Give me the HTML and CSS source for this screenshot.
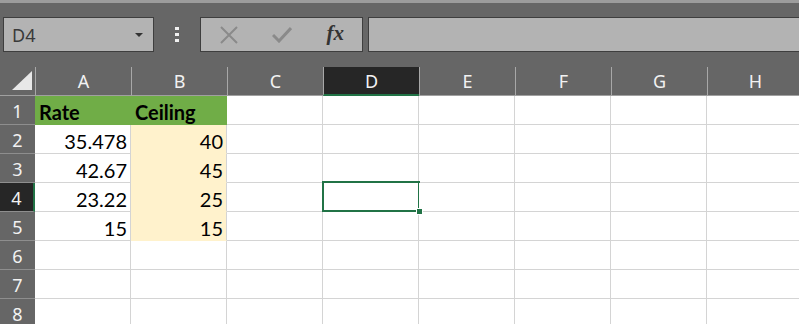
FILE: index.html
```html
<!DOCTYPE html>
<html lang="en">
<head>
    <meta charset="UTF-8">
    <title>Sheet</title>
    <link rel="stylesheet" href="styles.css">
</head>
<body>

<div class="topline"></div>
<div class="toolbar">
    <div class="namebox">
        <span>D4</span>
        <svg class="arrow" width="8" height="4" viewBox="0 0 8 4"><polygon points="0,0 8,0 4,4" fill="#333"/></svg>
    </div>
    <div class="grip"><i></i><i></i><i></i></div>
    <div class="fxbox">
        <div class="slot">
            <svg width="18" height="18" viewBox="0 0 18 18"><path d="M1 1 L17 17 M17 1 L1 17" stroke="#8a8a8a" stroke-width="2" fill="none"/></svg>
        </div>
        <div class="slot">
            <svg width="20" height="17" viewBox="0 0 20 17"><path d="M1 9 L7 15 L19 2" stroke="#8a8a8a" stroke-width="3" fill="none"/></svg>
        </div>
        <div class="slot"><span class="fx">fx</span></div>
    </div>
    <div class="formula"></div>
</div>

<div class="sheet">
    <!-- шапка колонок -->
    <div class="corner">
        <svg width="20" height="19" viewBox="0 0 20 19"><polygon points="20,0 20,19 0,19" fill="#e8e8e8"/></svg>
    </div>
    <div class="colhead">A</div>
    <div class="colhead">B</div>
    <div class="colhead">C</div>
    <div class="colhead active">D</div>
    <div class="colhead">E</div>
    <div class="colhead">F</div>
    <div class="colhead">G</div>
    <div class="colhead">H</div>

    <div class="rowhead">1</div>
    <div class="cell head">Rate</div>
    <div class="cell head">Ceiling</div>
    <div class="cell"></div><div class="cell"></div><div class="cell"></div><div class="cell"></div><div class="cell"></div><div class="cell"></div>

    <div class="rowhead">2</div>
    <div class="cell num">35.478</div>
    <div class="cell num ceil">40</div>
    <div class="cell"></div><div class="cell"></div><div class="cell"></div><div class="cell"></div><div class="cell"></div><div class="cell"></div>

    <div class="rowhead">3</div>
    <div class="cell num">42.67</div>
    <div class="cell num ceil">45</div>
    <div class="cell"></div><div class="cell"></div><div class="cell"></div><div class="cell"></div><div class="cell"></div><div class="cell"></div>

    <div class="rowhead active">4</div>
    <div class="cell num">23.22</div>
    <div class="cell num ceil">25</div>
    <div class="cell"></div>
    <div class="cell selected"><span class="handle"></span></div>
    <div class="cell"></div><div class="cell"></div><div class="cell"></div><div class="cell"></div>

    <div class="rowhead">5</div>
    <div class="cell num">15</div>
    <div class="cell num ceil">15</div>
    <div class="cell"></div><div class="cell"></div><div class="cell"></div><div class="cell"></div><div class="cell"></div><div class="cell"></div>

    <div class="rowhead">6</div>
    <div class="cell"></div><div class="cell"></div><div class="cell"></div><div class="cell"></div><div class="cell"></div><div class="cell"></div><div class="cell"></div><div class="cell"></div>

    <div class="rowhead">7</div>
    <div class="cell"></div><div class="cell"></div><div class="cell"></div><div class="cell"></div><div class="cell"></div><div class="cell"></div><div class="cell"></div><div class="cell"></div>

    <div class="rowhead">8</div>
    <div class="cell"></div><div class="cell"></div><div class="cell"></div><div class="cell"></div><div class="cell"></div><div class="cell"></div><div class="cell"></div><div class="cell"></div>
</div>

</body>
</html>
```

FILE: styles.css
```css
* {
    box-sizing: border-box;
}
html, body {
    margin: 0;
    padding: 0;
    width: 799px;
    height: 324px;
    overflow: hidden;
    background: #666;
    font-family: "Noto Sans", Arial, sans-serif;
}
.topline {
    height: 3px;
    background: #9c9c9c;
}
.toolbar {
    display: flex;
    height: 64px;
    padding-top: 14px;
    align-items: flex-start;
}
.namebox, .fxbox, .formula {
    height: 35px;
    background: #b3b3b3;
    border: 1px solid #3e3e3e;
}
.namebox {
    width: 151px;
    margin-left: 3px;
    display: flex;
    align-items: center;
    justify-content: space-between;
    padding: 0 10px 0 8px;
    color: #3a3a3a;
    font-size: 18px;
}
.arrow {
    margin-top: 1px;
}
.grip {
    width: 46px;
    height: 35px;
    display: flex;
    flex-direction: column;
    align-items: center;
    justify-content: center;
    gap: 3px;
}
.grip i {
    display: block;
    width: 4px;
    height: 3px;
    background: #f0f0f0;
}
.fxbox {
    width: 163px;
    display: flex;
    padding-left: 1px;
}
.slot {
    width: 54px;
    display: flex;
    align-items: center;
    justify-content: center;
}
.fx {
    font-family: "Liberation Serif", serif;
    font-style: italic;
    font-weight: bold;
    font-size: 21px;
    color: #333;
    margin-top: -3px;
}
.formula {
    flex: 1;
    margin-left: 5px;
    border-right: none;
}

.sheet {
    display: grid;
    grid-template-columns: 35px repeat(8, 96px);
    grid-template-rows: 29px repeat(8, 29px);
}
.corner {
    display: flex;
    justify-content: flex-end;
    align-items: flex-end;
    padding: 0 3px 5px 0;
    border-bottom: 1px solid #a0a0a0;
}
.colhead {
    display: flex;
    justify-content: center;
    align-items: flex-end;
    padding-bottom: 2px;
    color: #f2f2f2;
    font-size: 18px;
    border-left: 1px solid #a8a8a8;
    border-bottom: 1px solid #a0a0a0;
}
.colhead.active {
    background: #262626;
    border-bottom: 2px solid #217346;
    padding-bottom: 1px;
}
.rowhead {
    display: flex;
    justify-content: center;
    align-items: center;
    padding-top: 2px;
    color: #f2f2f2;
    font-size: 18px;
    border-bottom: 1px solid #8e8e8e;
}
.rowhead.active {
    background: #262626;
    border-right: 2px solid #217346;
}
.cell {
    position: relative;
    background: #fff;
    border-right: 1px solid #d4d4d4;
    border-bottom: 1px solid #d4d4d4;
    display: flex;
    align-items: flex-end;
    padding: 0 4px 0 4px;
    font-family: Lato, "Liberation Sans", sans-serif;
    font-size: 20px;
    line-height: 24px;
    color: #000;
}
.cell.head {
    background: #70ad47;
    border-color: #70ad47;
    font-weight: bold;
}
.cell.num {
    justify-content: flex-end;
    padding-right: 3px;
}
.cell.ceil {
    background: #fff2cc;
    border-bottom-color: #fff2cc;
}
.selected::after {
    content: "";
    position: absolute;
    top: -2px;
    left: -1px;
    right: -2px;
    bottom: -1px;
    border: 2px solid #217346;
}
.handle {
    position: absolute;
    right: -5px;
    bottom: -4px;
    width: 7px;
    height: 7px;
    background: #217346;
    border: 1px solid #fff;
    z-index: 2;
}
```
